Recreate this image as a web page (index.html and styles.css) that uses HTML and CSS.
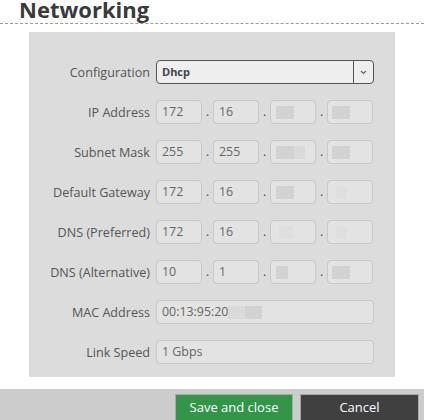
FILE: index.html
```html
<!DOCTYPE html>
<html>
<head>
<meta charset="utf-8">
<link rel="stylesheet" href="styles.css">
</head>
<body>
<div class="title">Networking</div>
<div class="rule"></div>
<div class="panel">
  <div class="row">
    <label class="lbl">Configuration</label>
    <div class="select"><span class="sel-val">Dhcp</span><span class="sel-btn"><svg width="7" height="5" viewBox="0 0 7 5"><path d="M1 1 L3.5 3.5 L6 1" fill="none" stroke="#666" stroke-width="1.1"/></svg></span></div>
  </div>
  <div class="row">
    <label class="lbl">IP Address</label>
    <div class="ip">
      <div class="box">172</div><span class="dot">.</span>
      <div class="box">16</div><span class="dot">.</span>
      <div class="box"><span class="red dk w18"></span></div><span class="dot">.</span>
      <div class="box"><span class="red dk w18 off"></span></div>
    </div>
  </div>
  <div class="row">
    <label class="lbl">Subnet Mask</label>
    <div class="ip">
      <div class="box">255</div><span class="dot">.</span>
      <div class="box">255</div><span class="dot">.</span>
      <div class="box"><span class="red dk w18"></span><span class="red lt w11"></span></div><span class="dot">.</span>
      <div class="box"><span class="red dk w18 off"></span></div>
    </div>
  </div>
  <div class="row">
    <label class="lbl">Default Gateway</label>
    <div class="ip">
      <div class="box">172</div><span class="dot">.</span>
      <div class="box">16</div><span class="dot">.</span>
      <div class="box"><span class="red dk w18"></span></div><span class="dot">.</span>
      <div class="box"><span class="red fa w10 off2"></span></div>
    </div>
  </div>
  <div class="row">
    <label class="lbl">DNS (Preferred)</label>
    <div class="ip">
      <div class="box">172</div><span class="dot">.</span>
      <div class="box">16</div><span class="dot">.</span>
      <div class="box"><span class="red fa w14 off2"></span></div><span class="dot">.</span>
      <div class="box"><span class="red fa w10 off2"></span></div>
    </div>
  </div>
  <div class="row">
    <label class="lbl">DNS (Alternative)</label>
    <div class="ip">
      <div class="box">10</div><span class="dot">.</span>
      <div class="box">1</div><span class="dot">.</span>
      <div class="box"><span class="red dk w12"></span></div><span class="dot">.</span>
      <div class="box"><span class="red dk w18 off"></span></div>
    </div>
  </div>
  <div class="row">
    <label class="lbl">MAC Address</label>
    <div class="field">00:13:95:20<span class="red lt w17"></span><span class="red dk w17"></span></div>
  </div>
  <div class="row">
    <label class="lbl">Link Speed</label>
    <div class="field">1 Gbps</div>
  </div>
</div>
<div class="footer">
  <button class="btn save">Save and close</button>
  <button class="btn cancel">Cancel</button>
</div>
</body>
</html>
```
FILE: styles.css
```css
* { box-sizing: border-box; }
html, body { margin: 0; padding: 0; background: #fff; }
body {
  width: 424px;
  height: 420px;
  overflow: hidden;
  font-family: "Open Sans", "Noto Sans", sans-serif;
}
.title {
  height: 23px;
  padding-left: 19px;
  font-size: 22px;
  font-weight: 700;
  line-height: 18px;
  color: #3a3a3a;
}
.rule {
  border-top: 1px dashed #9a9a9a;
  height: 0;
}
.panel {
  margin: 8px 29px 0 29px;
  background: #dcdcdc;
  padding: 28px 21px 13px 0;
  display: flex;
  flex-direction: column;
  gap: 16px;
}
.row {
  display: grid;
  grid-template-columns: 121px 218px;
  column-gap: 6px;
  align-items: center;
  height: 24px;
}
.lbl {
  text-align: right;
  font-size: 12.6px;
  color: #555;
  white-space: nowrap;
}
.select {
  height: 24px;
  border: 1px solid #555;
  border-radius: 4px;
  background: #eeeeee;
  display: flex;
  align-items: stretch;
}
.sel-val {
  flex: 1;
  font-size: 11px;
  font-weight: 700;
  color: #444;
  padding-left: 5px;
  line-height: 22px;
}
.sel-btn {
  width: 20px;
  border-left: 1px solid #555;
  display: flex;
  align-items: center;
  justify-content: center;
}
.ip {
  display: flex;
  align-items: center;
  height: 24px;
}
.box, .field {
  height: 24px;
  border: 1px solid #c9c9c9;
  border-radius: 4px;
  background: #e3e3e3;
  font-size: 12.4px;
  color: #666;
  padding-left: 5px;
  line-height: 22px;
  display: flex;
  align-items: center;
  white-space: nowrap;
}
.box { width: 46px; }
.field { width: 218px; }
.dot {
  width: 11px;
  text-align: center;
  font-size: 12px;
  color: #444;
  line-height: 22px;
}
.red { display: inline-block; height: 13px; }
.dk { background: #d2d2d2; }
.lt { background: #dadada; }
.fa { background: #dedede; }
.w10 { width: 10px; }
.w11 { width: 11px; }
.w12 { width: 12px; }
.w14 { width: 14px; }
.w17 { width: 17px; }
.w18 { width: 18px; }
.off { margin-left: -1px; }
.off2 { margin-left: 3px; }
.footer {
  margin-top: 12px;
  background: #cccccc;
  height: 40px;
  display: flex;
  justify-content: flex-end;
  gap: 7px;
  padding: 5px 5px 0 0;
  align-items: flex-start;
}
.btn {
  height: 30px;
  font-family: "Open Sans", "Noto Sans", sans-serif;
  font-size: 13px;
  color: #fff;
  border: 1px solid #a9a9a9;
  padding: 0 0 4px 0;
}
.save { width: 118px; background: #329547; }
.cancel { width: 119px; background: #404040; }
```
